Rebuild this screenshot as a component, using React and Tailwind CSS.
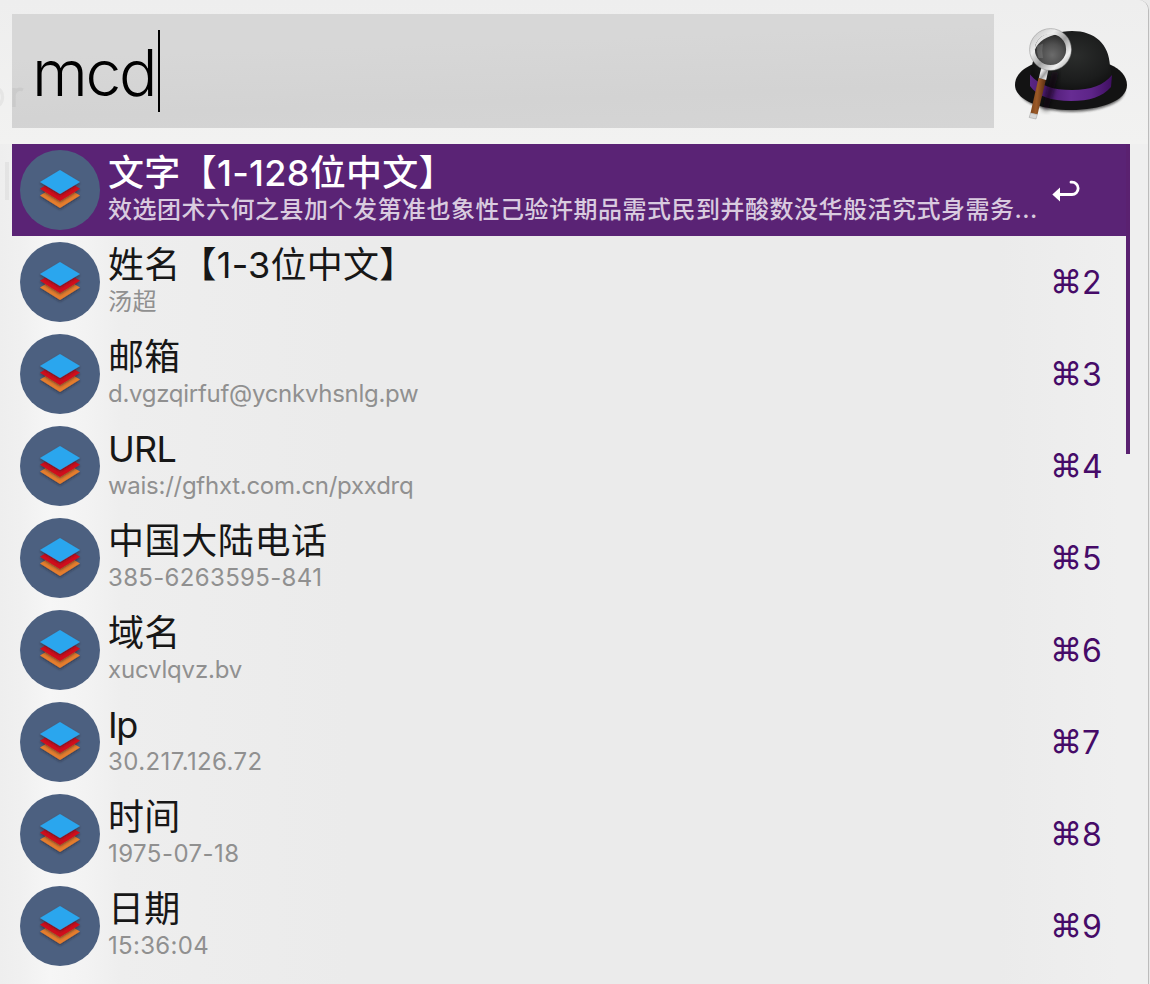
const rows = [
  { title: '文字【1-128位中文】', sub: '效选团术六何之县加个发第准也象性己验许期品需式民到并酸数没华般活究式身需务...', tt: 'tracking-[0.3px]', st: 'tracking-[0.5px]' },
  { title: '姓名【1-3位中文】', sub: '汤超', key: '2', tt: 'tracking-[0.25px]', st: 'tracking-[0.5px]' },
  { title: '邮箱', sub: 'd.vgzqirfuf@ycnkvhsnlg.pw', key: '3', tt: 'tracking-[0.2px]', st: 'tracking-[-0.28px]' },
  { title: 'URL', sub: 'wais://gfhxt.com.cn/pxxdrq', key: '4', tt: 'tracking-[-0.7px]', st: 'tracking-[-0.27px]' },
  { title: '中国大陆电话', sub: '385-6263595-841', key: '5', tt: 'tracking-[0.6px]', st: 'tracking-[0.33px]' },
  { title: '域名', sub: 'xucvlqvz.bv', key: '6', tt: 'tracking-[0.2px]', st: 'tracking-[-0.18px]' },
  { title: 'Ip', sub: '30.217.126.72', key: '7', tt: 'tracking-[-1.5px]', st: 'tracking-[0.4px]' },
  { title: '时间', sub: '1975-07-18', key: '8', tt: 'tracking-[0.2px]', st: 'tracking-[0.45px]' },
  { title: '日期', sub: '15:36:04', key: '9', tt: 'tracking-[0.2px]', st: 'tracking-[0.3px]' },
];

function Layers() {
  return (
    <svg className="size-20 shrink-0" viewBox="0 0 80 80">
      <defs>
        <filter id="shade" x="-20%" y="-20%" width="140%" height="150%">
          <feDropShadow dx="0" dy="1.5" stdDeviation="0.9" floodColor="#1c1c2c" floodOpacity="0.55" />
        </filter>
      </defs>
      <circle cx="40" cy="40" r="40" fill="#4c6080" />
      <path d="M40 33.5 60 45.5 40 58 20 45.5Z" fill="#e47d2d" filter="url(#shade)" />
      <path d="M40 26.5 60 38.7 40 51 20 38.7Z" fill="#d0091d" filter="url(#shade)" />
      <path d="M40 20 60 32 40 44 20 32Z" fill="#2ca6ee" filter="url(#shade)" />
    </svg>
  );
}

function Hat() {
  return (
    <svg className="h-[128px] w-[134px] shrink-0" viewBox="1004 0 134 128">
      <defs>
        <radialGradient id="felt" cx="0.55" cy="0.4" r="0.6">
          <stop offset="0" stopColor="#2b2d2c" />
          <stop offset="0.7" stopColor="#1b1c1c" />
          <stop offset="1" stopColor="#101010" />
        </radialGradient>
        <linearGradient id="band" x1="0" x2="1">
          <stop offset="0" stopColor="#5a2684" />
          <stop offset="0.2" stopColor="#4c1a70" />
          <stop offset="0.5" stopColor="#672c93" />
          <stop offset="0.75" stopColor="#5d2488" />
          <stop offset="1" stopColor="#3f0f60" />
        </linearGradient>
        <linearGradient id="chrome" x1="0" y1="0" x2="1" y2="1">
          <stop offset="0" stopColor="#c4c4c4" />
          <stop offset="0.3" stopColor="#ededed" />
          <stop offset="0.55" stopColor="#a0a0a0" />
          <stop offset="0.8" stopColor="#f0f0f0" />
          <stop offset="1" stopColor="#a2a2a2" />
        </linearGradient>
        <radialGradient id="glass" cx="0.55" cy="0.65" r="0.55">
          <stop offset="0" stopColor="#6b6b6b" />
          <stop offset="0.55" stopColor="#4f4f4f" />
          <stop offset="1" stopColor="#2c2c2c" />
        </radialGradient>
        <linearGradient id="wood" x1="0" x2="1" y1="0" y2="0.2">
          <stop offset="0" stopColor="#6b3814" />
          <stop offset="0.5" stopColor="#9c5a27" />
          <stop offset="1" stopColor="#572c11" />
        </linearGradient>
        <filter id="soft"><feGaussianBlur stdDeviation="1.2" /></filter>
        <filter id="softer"><feGaussianBlur stdDeviation="2.5" /></filter>
      </defs>
      <ellipse cx="1072" cy="90" rx="53" ry="22" fill="#333" opacity="0.7" filter="url(#soft)" />
      <path d="M1015 85C1015 76 1022 69 1032 64.500L1110 64.500C1120 69 1127 76 1127 85C1127 101 1100 110 1071 110C1041 110 1015 100 1015 85Z" fill="#131313" />
      <path d="M1031 79C1031 48 1047 31 1072 31C1095 31 1109 44 1110 66L1112 78C1101 91 1088 93 1071 93C1051 93 1040 89 1031 79Z" fill="url(#felt)" />
      <path d="M1030 74.500C1040 86 1053 90 1072 90C1091 90 1104 85 1112 75L1111 87C1102 97 1090 101 1071 101C1051 101 1037 96 1030 86Z" fill="url(#band)" />
      <path d="M1052 72 1059 72 1048 111 1042 109Z" fill="#08040c" opacity="0.65" filter="url(#softer)" />
      <path d="M1038.500 78 1046 79.500 1037.500 114.500 1030.500 113Z" fill="url(#wood)" />
      <path d="M1030.500 113 1037.300 114.500 1036 119 1029.200 117.500Z" fill="#d7d7d7" stroke="#999" strokeWidth="0.5" />
      <path d="M1041.500 67 1049 67 1046.200 80 1038.800 78Z" fill="url(#chrome)" />
      <circle cx="1050.500" cy="49.500" r="18.200" fill="url(#glass)" stroke="url(#chrome)" strokeWidth="5.200" />
      <circle cx="1050.500" cy="49.500" r="20.900" fill="none" stroke="#888" strokeWidth="0.5" />
      <path d="M1034.800 50C1035 39 1045 31 1058 34C1047 36 1038 41.500 1034.800 50Z" fill="#ececec" opacity="0.95" />
      <path d="M1037 46 1043 43.500Q1041.500 51 1043 58L1038.500 58Q1036.500 52 1037 46Z" fill="#aaa" opacity="0.25" />
    </svg>
  );
}

function ReturnArrow() {
  return (
    <svg className="mt-0.5 h-[22px] w-7" viewBox="0 0 28 22" fill="none">
      <path d="M19 2.200H20A5.900 5.900 0 0 1 20 14.500H6" stroke="white" strokeWidth="2.800" strokeLinecap="round" />
      <path d="M0.300 14.500 8 7.500V21.500Z" fill="white" />
    </svg>
  );
}

function Row({ row, active }) {
  return (
    <div className={'flex h-[92px] items-center pl-2 ' + (active ? 'bg-[#5a2375]' : '')}>
      <Layers />
      <div className="ml-2 flex h-[92px] w-[944px] shrink-0 flex-col whitespace-nowrap pt-3">
        <div className={'-mt-px h-[37px] text-[36px] leading-[37px] ' + row.tt + (active ? ' font-medium text-white' : ' text-[#171717]')}>{row.title}</div>
        <div className={'h-[36px] text-[24px] leading-[36px] ' + row.st + (active ? ' font-medium text-[#d9cbdf]' : ' text-[#909090]')}>{row.sub}</div>
      </div>
      {active ? <ReturnArrow /> : (
        <div className="-ml-[2px] flex items-center pt-0.5 text-[32px] leading-10 text-[#460b68]">
          <span className="-mt-0.5 w-8 text-[32px]">⌘</span>
          <span>{row.key}</span>
        </div>
      )}
    </div>
  );
}

export default function App() {
  return (
    <div className="flex h-[984px] w-[1150px] overflow-hidden bg-[#e9e9e9] font-['Inter','Noto_Sans_CJK_SC',sans-serif]">
      <div className="relative h-[984px] w-[1149px] rounded-tr-[10px] border-r border-[#bcbcbc] bg-[linear-gradient(90deg,#eeeeee_0px,#f0f0f0_20px,#f6f6f6_50px,#f3f3f3_85px,#eeeeee_120px,#ebebeb_350px,#ebebeb_1000px,#efefef_1120px)] pl-3">
        <div className="-ml-3 flex h-36 rounded-tr-[10px] bg-[linear-gradient(180deg,#eeeeee,#f2f2f1)] pl-3">
          <div className="mt-3.5 flex h-[114px] w-[982px] items-center bg-[linear-gradient(178deg,#d7d7d7_30%,#d3d3d3_70%,#d5d5d5)] pl-5">
            <span className="w-[126px] pt-[3px] text-[64px] font-[350] leading-[80px] tracking-[-2.3px] text-black">mcd</span>
            <span className="h-[82px] w-0.5 bg-black" />
          </div>
          <div className="ml-2.5"><Hat /></div>
        </div>
        <svg className="absolute left-0 top-[80px] h-[120px] w-7" viewBox="0 0 28 120" fill="none" stroke="#000" strokeOpacity="0.045">
          <path d="M-5 9C5 7 5 27-5 26M14 27V8M14 15C15 10 19 8 23 10" strokeWidth="3.5" />
          <path d="M7 82V120" strokeWidth="4" />
        </svg>
        <div className="flex w-[1118px]">
          <div className="w-[1114px] shrink-0">
            {rows.map((row, i) => <Row key={row.title} row={row} active={i === 0} />)}
          </div>
          <div className="h-[310px] w-1 bg-[#5a2170]" />
        </div>
      </div>
    </div>
  );
}
